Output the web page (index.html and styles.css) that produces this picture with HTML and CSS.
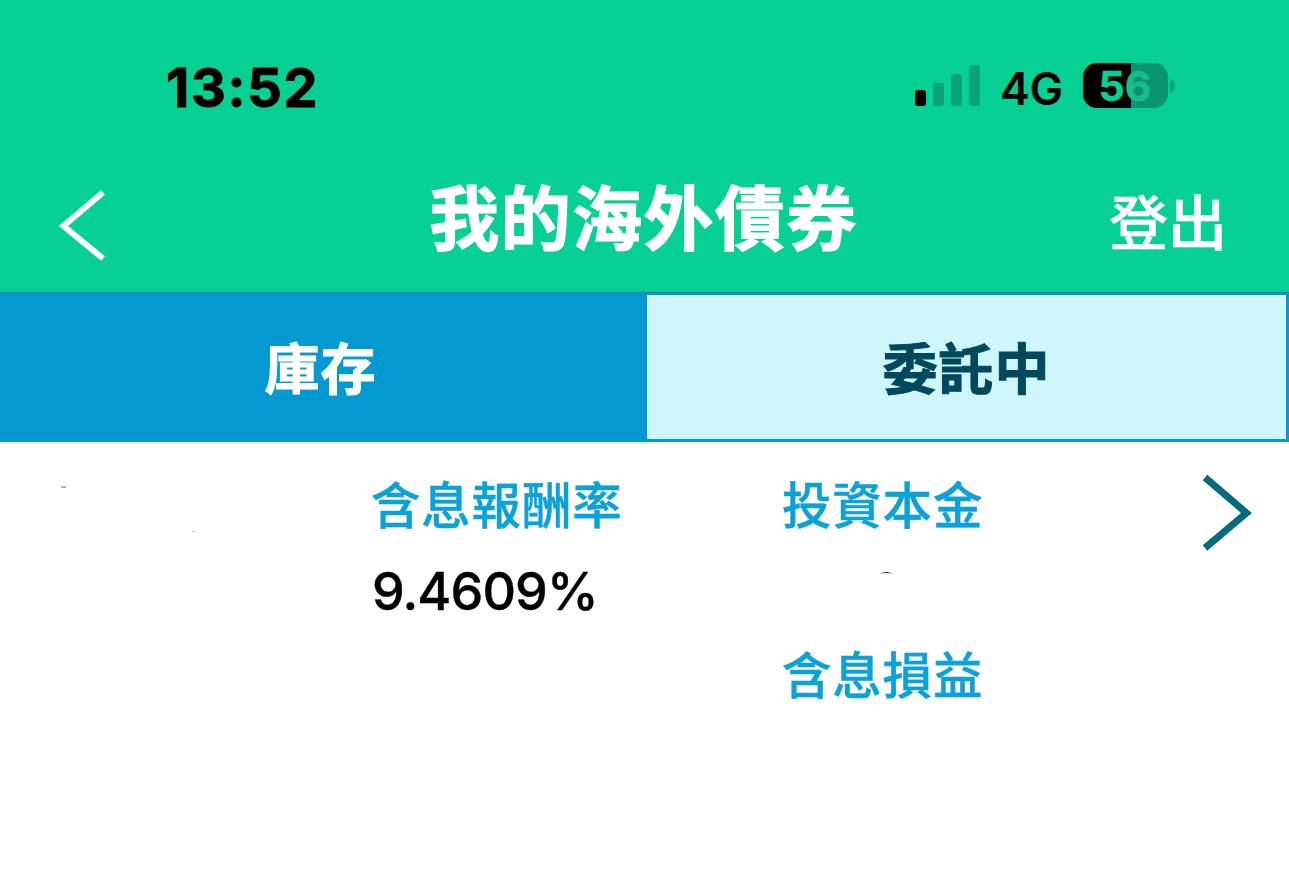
FILE: index.html
```html
<!DOCTYPE html>
<html lang="zh-Hant">
<head>
<meta charset="utf-8">
<title>我的海外債券</title>
<link rel="stylesheet" href="styles.css">
</head>
<body>
<header class="header">
  <div class="status">
    <span class="time">13:52</span>
    <div class="indicators">
      <svg class="signal" width="66" height="42" viewBox="0 0 66 42"><rect x="0" y="25" width="11" height="16" rx="3"/><g fill="#07a475"><rect x="18" y="18" width="11" height="23" rx="3"/><rect x="36" y="9" width="11" height="32" rx="3"/><rect x="54" y="0" width="11" height="41" rx="3"/></g></svg>
      <span class="network">4G</span>
      <div class="battery"><span class="level">5<span class="dim">6</span></span></div>
      <svg class="cap" width="6" height="16" viewBox="0 0 6 16"><path d="M0 1Q5 3 5 8T0 15Z" fill="#07a475"/></svg>
    </div>
  </div>
  <nav class="nav">
    <svg class="back" width="48" height="74" viewBox="0 0 48 74"><path d="M45 3.5L5.500 37L45 69.500" fill="none" stroke="#fff" stroke-width="6"/></svg>
    <h1 class="title">我的海外債券</h1>
    <span class="logout">登出</span>
  </nav>
</header>
<div class="tabs"><div class="tab active">庫存</div><div class="tab pending">委託中</div></div>
<main class="holding">
  <svg class="name" width="371" height="100" viewBox="0 0 371 100"><path d="M61 45h5" stroke="#999" stroke-width="1.500"/><path d="M192 89.500h4" stroke="#ccc"/></svg>
  <section class="rate"><div class="label">含息報酬率</div><div class="value">9.4609%</div></section>
  <section class="amounts"><div class="label">投資本金</div><svg class="principal" width="200" height="10" viewBox="0 0 200 10"><path d="M98 2.500Q104 -.5 111 2.500Q104 1.500 98 2.500Z" fill="#333"/></svg><div class="label profit">含息損益</div></section>
  <svg class="next" width="52" height="78" viewBox="0 0 52 78"><path d="M3 3.500L44.500 39L3 74" fill="none" stroke="#066b80" stroke-width="7"/></svg>
</main>
</body>
</html>
```
FILE: styles.css
```css
* { box-sizing: border-box; }
body { margin: 0; width: 1289px; height: 886px; overflow: hidden; background: #fefefe; font-family: Inter, "Noto Sans CJK TC", sans-serif; }
.header { height: 292px; background: #06d094; color: #fff; }
.status { height: 150px; padding: 57px 113px 0 166px; display: flex; justify-content: space-between; align-items: flex-start; color: #000; }
.time { font-size: 54px; line-height: 61px; font-weight: 700; letter-spacing: 1.7px; -webkit-text-stroke: 1px #000; }
.indicators { display: flex; align-items: flex-start; }
.signal { margin-top: 8px; }
.network { margin-left: 19px; width: 83px; font-size: 45px; line-height: 63px; font-weight: 600; letter-spacing: -.5px; }
.battery { margin-top: 6px; width: 85px; height: 45px; border-radius: 14px; background: linear-gradient(90deg, #000 48px, #08966d 48px); text-align: center; }
.level { display: block; padding-right: 1px; color: #06d094; font-size: 41px; line-height: 46px; font-weight: 700; -webkit-text-stroke: .5px currentColor; }
.dim { color: #17bd8b; }
.cap { margin: 21px 0 0 2px; }
.nav { height: 142px; padding: 0 62px 0 58px; display: grid; grid-template-columns: 300px 1fr 300px; }
.back { margin-top: 39px; }
.title { margin: 20px 0 0; padding-left: 2px; text-align: center; font-family: "Noto Sans CJK TC", sans-serif; font-size: 70px; line-height: 90px; font-weight: 700; white-space: nowrap; letter-spacing: 1.4px; -webkit-text-stroke: 1.2px #fff; }
.logout { margin-top: 34px; text-align: right; font-size: 59px; line-height: 80px; font-weight: 500; -webkit-text-stroke: .5px #fff; }
.tabs { height: 150px; display: grid; grid-template-columns: 644px 645px; background: #049ad1; border-top: 1px solid #0878ad; }
.tab { padding-top: 32px; text-align: center; font-family: "Noto Sans CJK TC", sans-serif; font-size: 55px; line-height: 80px; font-weight: 700; letter-spacing: 1px; }
.active { padding-right: 3px; color: #fff; -webkit-text-stroke: 1px #fff; }
.pending { padding-top: 30px; color: #00495c; background: #cff6fb; border: 3px solid #049ad1; border-top-width: 2px; -webkit-text-stroke: 1px #00495c; }
.holding { display: grid; grid-template-columns: 371px 411px 420px 52px; }
.label { font-family: "Noto Sans CJK TC", sans-serif; color: #0ca2d9; font-size: 49.5px; line-height: 60px; font-weight: 500; letter-spacing: .8px; -webkit-text-stroke: .4px #0ca2d9; }
.rate, .amounts { padding-top: 31px; }
.value { margin-top: 29px; padding-left: 1px; font-size: 52px; line-height: 60px; font-weight: 500; letter-spacing: -.9px; -webkit-text-stroke: .4px #000; }
.principal { display: block; margin-top: 38px; }
.profit { margin-top: 62px; }
.next { margin-top: 32px; }
```
